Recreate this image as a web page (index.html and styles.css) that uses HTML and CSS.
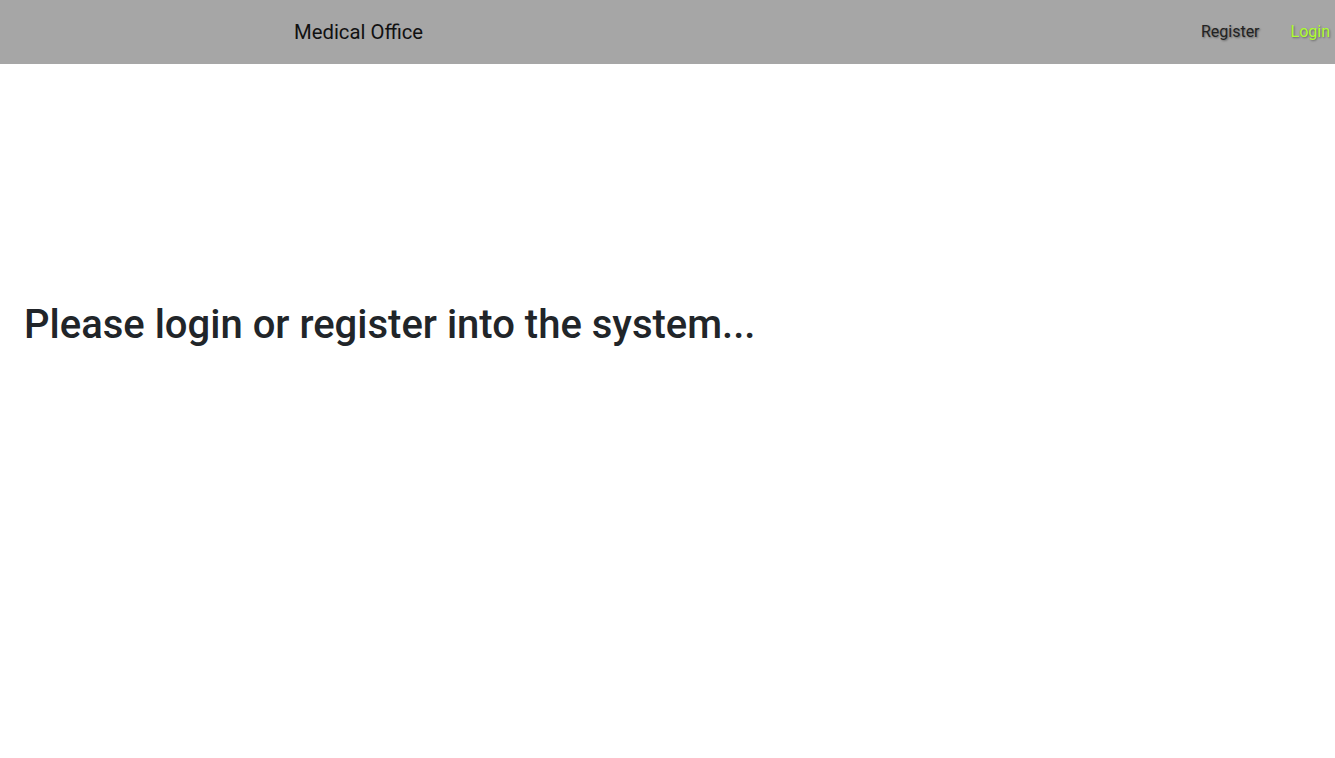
FILE: index.html
```html
<!DOCTYPE html>
<html>
<head>
<meta charset="utf-8">
<link rel="stylesheet" href="styles.css">
</head>
<body>
<header class="navbar">
  <div class="brand">Medical Office</div>
  <nav class="links">
    <a class="link" href="#">Register</a>
    <a class="link link-login" href="#">Login</a>
  </nav>
</header>
<main class="main">
  <h1 class="title">Please login or register into the system...</h1>
</main>
</body>
</html>
```
FILE: styles.css
```css
html, body {
  margin: 0;
  padding: 0;
  background: #fff;
  font-family: Roboto, "Liberation Sans", sans-serif;
}
.navbar {
  height: 64px;
  background: #a6a6a6;
  display: flex;
  align-items: center;
  justify-content: space-between;
  padding-left: 294px;
  box-sizing: border-box;
}
.brand {
  font-size: 20.3px;
  color: #111;
  margin-top: -1px;
}
.links {
  display: flex;
  gap: 31px;
  padding-right: 5px;
  margin-top: -1px;
}
.link {
  font-size: 16px;
  text-decoration: none;
  color: #222;
  text-shadow: 1px 1px 2px rgba(0,0,0,0.4);
}
.link-login {
  color: #adff2f;
}
.main {
  height: 694px;
  display: flex;
  align-items: center;
  padding-left: 24px;
  padding-bottom: 172px;
  box-sizing: border-box;
}
.title {
  margin: 0;
  font-size: 40px;
  font-weight: 500;
  line-height: 1.2;
  color: #212529;
}
```
